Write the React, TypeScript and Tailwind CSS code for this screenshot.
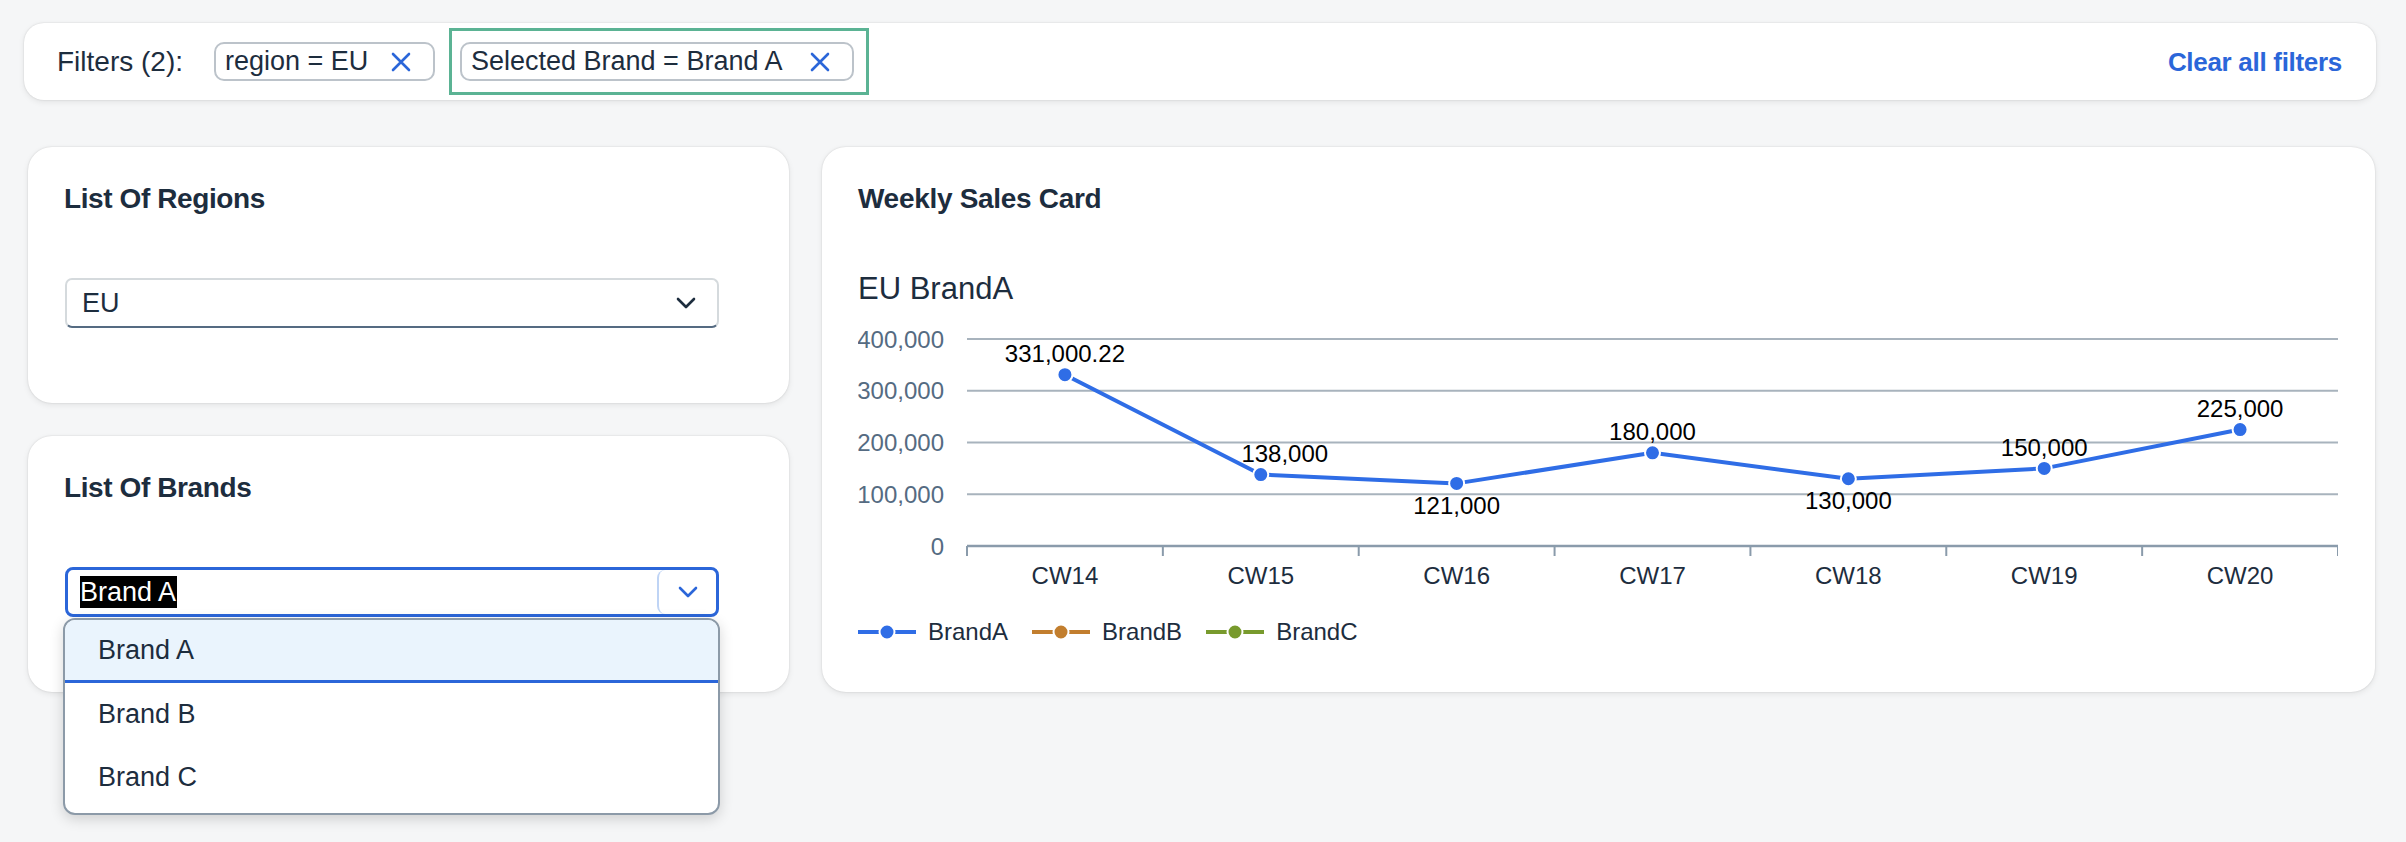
import React from "react";

const BLUE = "#2b66d9";

const weeks = ["CW14", "CW15", "CW16", "CW17", "CW18", "CW19", "CW20"];
const sales = [
    { v: 331000.22, label: "331,000.22", below: false, dx: 0 },
    { v: 138000, label: "138,000", below: false, dx: 24 },
    { v: 121000, label: "121,000", below: true, dx: 0 },
    { v: 180000, label: "180,000", below: false, dx: 0 },
    { v: 130000, label: "130,000", below: true, dx: 0 },
    { v: 150000, label: "150,000", below: false, dx: 0 },
    { v: 225000, label: "225,000", below: false, dx: 0 },
];

const legend = [
    { name: "BrandA", color: "#2f6de6" },
    { name: "BrandB", color: "#c27e2e" },
    { name: "BrandC", color: "#789a2d" },
];

function CloseIcon() {
    return (
        <svg width="20" height="20" viewBox="0 0 20 20" fill="none">
            <path d="M2 2 L18 18 M18 2 L2 18" stroke={BLUE} strokeWidth="2.6" strokeLinecap="round" />
        </svg>
    );
}

function Chevron({ color }: { color: string }) {
    return (
        <svg width="20" height="12" viewBox="0 0 20 12" fill="none">
            <path d="M2 2 L10 10 L18 2" stroke={color} strokeWidth="2.6" strokeLinecap="round" strokeLinejoin="round" />
        </svg>
    );
}

function Chip({ text, width }: { text: string; width: string }) {
    return (
        <div className={`${width} h-[39px] flex items-center justify-between border-2 border-[#bcc3ca] rounded-[10px] pl-[9px] pr-[22px] bg-white`}>
            <span className="text-[27px] leading-none text-[#1d2d3e] whitespace-nowrap">{text}</span>
            <CloseIcon />
        </div>
    );
}

function SalesChart() {
    const left = 109;
    const right = 1480;
    const zeroY = 227;
    const per100k = 51.75;
    const step = (right - left) / weeks.length;
    const pts = sales.map((s, i) => ({
        ...s,
        x: left + (i + 0.5) * step,
        y: zeroY - (s.v / 100000) * per100k,
    }));
    const ticks = [0, 100000, 200000, 300000, 400000];

    return (
        <svg width="1480" height="270" className="block" style={{ fontFamily: "'Liberation Sans', Arial, sans-serif" }}>
            {ticks.map((t) => {
                const y = zeroY - (t / 100000) * per100k;
                return (
                    <g key={t}>
                        {t > 0 && <line x1={left} x2={right} y1={y} y2={y} stroke="#a8b3bd" strokeWidth="2" />}
                        <text x="86" y={y} textAnchor="end" dominantBaseline="central" fontSize="24" fill="#556b82">
                            {t.toLocaleString("en-US")}
                        </text>
                    </g>
                );
            })}
            <line x1={left} x2={right} y1={zeroY} y2={zeroY} stroke="#8a9bab" strokeWidth="2.5" />
            {Array.from({ length: weeks.length + 1 }).map((_, i) => (
                <line key={i} x1={left + i * step} x2={left + i * step} y1={zeroY} y2={zeroY + 10} stroke="#8a9bab" strokeWidth="2" />
            ))}
            {weeks.map((w, i) => (
                <text key={w} x={left + (i + 0.5) * step} y="256" textAnchor="middle" dominantBaseline="central" fontSize="24" fill="#1d2d3e">
                    {w}
                </text>
            ))}
            <polyline
                points={pts.map((p) => `${p.x},${p.y}`).join(" ")}
                fill="none"
                stroke="#2f6de6"
                strokeWidth="4"
                strokeLinejoin="round"
            />
            {pts.map((p) => (
                <g key={p.label}>
                    <circle cx={p.x} cy={p.y} r="7.5" fill="#2f6de6" stroke="#ffffff" strokeWidth="2" />
                    <text
                        x={p.x + p.dx}
                        y={p.below ? p.y + 22 : p.y - 21}
                        textAnchor="middle"
                        dominantBaseline="central"
                        fontSize="24"
                        fill="#000000"
                    >
                        {p.label}
                    </text>
                </g>
            ))}
        </svg>
    );
}

export default function App() {
    return (
        <div className="min-h-[842px] w-full bg-[#f5f6f7] pt-[23px] pl-[24px] pr-[30px] font-['Liberation_Sans',Arial,sans-serif] text-[#1d2d3e]">
            {/* filter bar */}
            <div className="h-[77px] rounded-[20px] bg-white flex items-center pl-[33px] pr-[34px] shadow-[0_0_2px_rgba(0,0,0,0.14),0_2px_6px_rgba(0,0,0,0.08)]">
                <span className="text-[28px] leading-none">Filters (2):</span>
                <div className="ml-[31px]">
                    <Chip text="region = EU" width="w-[221px]" />
                </div>
                <div className="ml-[14px] w-[420px] h-[67px] border-[3px] border-[#5bb394] flex items-center pl-[8px]">
                    <Chip text="Selected Brand = Brand A" width="w-[394px]" />
                </div>
                <button type="button" className="ml-auto text-[26px] font-bold tracking-[-0.3px] text-[#2b66d9] leading-none">
                    Clear all filters
                </button>
            </div>

            <div className="mt-[47px] pl-[4px] pr-[1px] flex gap-[33px]">
                {/* left column */}
                <div className="w-[761px] flex flex-col gap-[33px]">
                    <div className="h-[256px] rounded-[24px] bg-white pt-[35px] px-[36px] shadow-[0_0_2px_rgba(0,0,0,0.14),0_2px_6px_rgba(0,0,0,0.08)]">
                        <h2 className="text-[28px] font-bold leading-[34px] tracking-[-0.4px]">List Of Regions</h2>
                        <div className="mt-[62px] ml-[1px] w-[654px] h-[50px] rounded-[7px] border-2 border-[#d5dadd] border-b-[#556b82] flex items-center pl-[15px] pr-[21px]">
                            <span className="text-[27px] leading-none">EU</span>
                            <span className="ml-auto">
                                <Chevron color="#1d2d3e" />
                            </span>
                        </div>
                    </div>

                    <div className="relative z-10 h-[256px] rounded-[24px] bg-white pt-[35px] px-[36px] shadow-[0_0_2px_rgba(0,0,0,0.14),0_2px_6px_rgba(0,0,0,0.08)]">
                        <h2 className="text-[28px] font-bold leading-[34px] tracking-[-0.4px]">List Of Brands</h2>
                        <div className="relative mt-[62px] ml-[1px] w-[654px]">
                            <div className="h-[50px] rounded-[8px] border-[3px] border-[#2b66d9] flex items-center pl-[12px]">
                                <span className="bg-black text-white text-[27px] leading-[32px] pr-[1px]">Brand A</span>
                                <span className="ml-auto h-full w-[59px] border-l-2 border-[#bfd4f5] rounded-l-[8px] flex items-center justify-center">
                                    <Chevron color={BLUE} />
                                </span>
                            </div>
                            <div className="absolute left-[-2px] top-full mt-[1px] w-[657px] rounded-[12px] border-2 border-[#8c9aa8] bg-white pb-[4px] overflow-hidden shadow-[0_4px_14px_rgba(0,0,0,0.16)]">
                                <div className="h-[63px] bg-[#eaf4fd] border-b-[3px] border-[#2b66d9] flex items-center pl-[33px] text-[27px]">
                                    Brand A
                                </div>
                                <div className="h-[63px] flex items-center pl-[33px] text-[27px]">Brand B</div>
                                <div className="h-[63px] flex items-center pl-[33px] text-[27px]">Brand C</div>
                            </div>
                        </div>
                    </div>
                </div>

                {/* chart card */}
                <div className="flex-1 h-[545px] rounded-[24px] bg-white pt-[35px] px-[36px] shadow-[0_0_2px_rgba(0,0,0,0.14),0_2px_6px_rgba(0,0,0,0.08)]">
                    <h2 className="text-[28px] font-bold leading-[34px] tracking-[-0.3px]">Weekly Sales Card</h2>
                    <div className="mt-[54px] text-[31px] leading-[38px]">EU BrandA</div>
                    <div className="mt-[11px]">
                        <SalesChart />
                    </div>
                    <div className="mt-[28px] flex items-center gap-[24px] h-[30px]">
                        {legend.map((l) => (
                            <div key={l.name} className="flex items-center gap-[12px]">
                                <svg width="58" height="18" viewBox="0 0 58 18">
                                    <line x1="0" x2="58" y1="9" y2="9" stroke={l.color} strokeWidth="4" />
                                    <circle cx="29" cy="9" r="7.5" fill={l.color} stroke="#ffffff" strokeWidth="2" />
                                </svg>
                                <span className="text-[24px] leading-none">{l.name}</span>
                            </div>
                        ))}
                    </div>
                </div>
            </div>
        </div>
    );
}
